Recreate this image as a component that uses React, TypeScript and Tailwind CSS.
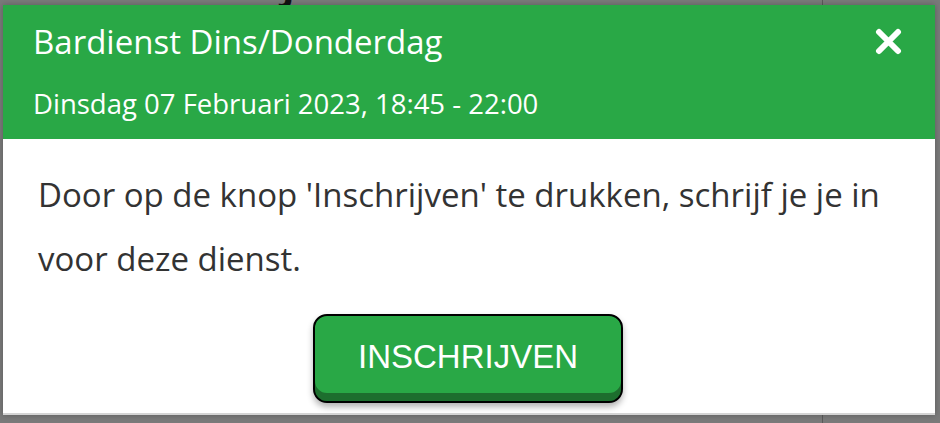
import { useState } from "react"

function CloseIcon() {
  return (
    <svg width="27" height="27" viewBox="0 0 27 27" aria-hidden="true">
      <path d="M4 4 L23 23 M23 4 L4 23" stroke="#ffffff" strokeWidth="6" strokeLinecap="round" />
    </svg>
  )
}

export default function App() {
  const [open, setOpen] = useState(true)

  return (
    <div className="relative w-[940px] h-[423px] overflow-hidden bg-[#7a7a7a] pt-[5px] pl-[3px]">
      {/* page behind the overlay, only its bottom edge shows */}
      <div
        aria-hidden="true"
        className="absolute left-[20px] top-[-35px] text-[40px] font-bold text-[#111] leading-none"
        style={{ fontFamily: "'Open Sans', sans-serif" }}
      >
        BARDIENST AJAX
      </div>
      <div className="absolute left-[822px] top-0 h-[5px] w-px bg-[#5a5a5a]" />
      <div className="absolute left-[822px] bottom-0 h-[8px] w-px bg-[#5a5a5a]" />

      {open && (
        <div
          className="relative w-[932px] h-[410px] bg-white border-b-2 border-[#d4d4d4] shadow-[0_0_6px_rgba(0,0,0,0.25)]"
          style={{ fontFamily: "'Open Sans', 'Noto Sans', sans-serif" }}
        >
          <div className="h-[134px] bg-[#29a846] px-[30px] pt-[15px] text-white">
            <div className="flex items-start justify-between">
              <h2 className="text-[33px] leading-[44px] font-normal">Bardienst Dins/Donderdag</h2>
              <button onClick={() => setOpen(false)} className="mt-[8px] mr-[3px]">
                <CloseIcon />
              </button>
            </div>
            <p className="mt-[22px] text-[27.5px] leading-[36px]">Dinsdag 07 Februari 2023, 18:45 - 22:00</p>
          </div>

          <div className="pl-[35px] pr-[37px] pt-[24px]">
            <p className="text-[33px] leading-[64px] text-[#333333]">
              Door op de knop 'Inschrijven' te drukken, schrijf je je in voor deze dienst.
            </p>
            <div className="flex justify-center mt-[23px]">
              <button
                className="w-[310px] h-[89px] rounded-[14px] border-2 border-black bg-[#29a846] text-white text-[33px] shadow-[inset_0_-8px_0_#1d6e2e,0_4px_6px_rgba(0,0,0,0.3)] pb-[4px]"
                style={{ fontFamily: "'Liberation Sans', Arial, sans-serif" }}
              >
                INSCHRIJVEN
              </button>
            </div>
          </div>
        </div>
      )}
    </div>
  )
}
